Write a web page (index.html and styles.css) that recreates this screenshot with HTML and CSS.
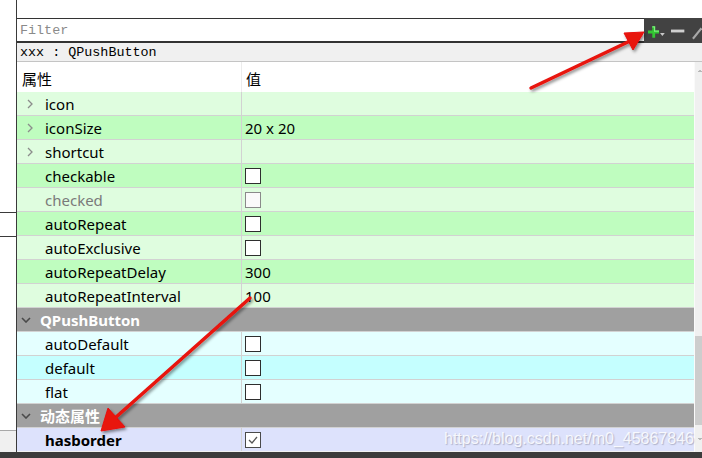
FILE: index.html
```html
<!DOCTYPE html>
<html lang="zh">
<head>
<meta charset="utf-8">
<title>Property Editor</title>
<link rel="stylesheet" href="styles.css">
</head>
<body>
<div class="app">
  <div class="body">
    <div class="side">
      <div class="side-box"></div>
      <div class="side-fill"></div>
      <div class="side-bottom"></div>
    </div>
    <div class="main">
      <div class="top"></div>
      <div class="filter-row">
        <div class="filter">Filter</div>
        <div class="tools">
          <svg class="ic-plus" width="12" height="12" viewBox="0 0 12 12"><path d="M4.5 0h3v4.5H12v3H7.5V12h-3V7.5H0v-3h4.5z" fill="#33c733"/><path d="M4.5 0h3v4.5H12v1.2H6.3V1.2H4.5z" fill="#7ef07e"/></svg>
          <svg class="ic-drop" width="5" height="3" viewBox="0 0 5 3"><path d="M0 0h5L2.5 3z" fill="#c8c8c8"/></svg>
          <svg class="ic-minus" width="14" height="4" viewBox="0 0 14 4"><rect x="0" y="0.5" width="14" height="3" fill="#cfcfcf"/></svg>
          <svg class="ic-edit" width="12" height="14" viewBox="0 0 12 14"><path d="M2 13 L11 2" stroke="#a8a8a8" stroke-width="2.2"/></svg>
        </div>
      </div>
      <div class="objbar">xxx : QPushButton</div>
      <div class="tree">
        <div class="tbl">
          <div class="row head"><div class="c1 hc1">属性</div><div class="c2 hc2">值</div></div>

          <div class="row g1"><div class="c1"><span class="exp"><svg width="6" height="10" viewBox="0 0 6 10"><polyline points="1,1 5,5 1,9" fill="none" stroke="#8c8c8c" stroke-width="1.3"/></svg></span>icon</div><div class="c2"></div></div>
          <div class="row g2"><div class="c1"><span class="exp"><svg width="6" height="10" viewBox="0 0 6 10"><polyline points="1,1 5,5 1,9" fill="none" stroke="#8c8c8c" stroke-width="1.3"/></svg></span>iconSize</div><div class="c2">20 x 20</div></div>
          <div class="row g1"><div class="c1"><span class="exp"><svg width="6" height="10" viewBox="0 0 6 10"><polyline points="1,1 5,5 1,9" fill="none" stroke="#8c8c8c" stroke-width="1.3"/></svg></span>shortcut</div><div class="c2"></div></div>
          <div class="row g2"><div class="c1"><span class="exp"></span>checkable</div><div class="c2"><span class="cb"></span></div></div>
          <div class="row g1"><div class="c1 dim"><span class="exp"></span>checked</div><div class="c2"><span class="cb off"></span></div></div>
          <div class="row g2"><div class="c1"><span class="exp"></span>autoRepeat</div><div class="c2"><span class="cb"></span></div></div>
          <div class="row g1"><div class="c1"><span class="exp"></span>autoExclusive</div><div class="c2"><span class="cb"></span></div></div>
          <div class="row g2"><div class="c1"><span class="exp"></span>autoRepeatDelay</div><div class="c2">300</div></div>
          <div class="row g1"><div class="c1"><span class="exp"></span>autoRepeatInterval</div><div class="c2">100</div></div>

          <div class="row sect"><span class="sexp"><svg width="10" height="6" viewBox="0 0 10 6"><polyline points="1,1 5,5 9,1" fill="none" stroke="#4a4a4a" stroke-width="1.6"/></svg></span>QPushButton</div>
          <div class="row c1r"><div class="c1"><span class="exp"></span>autoDefault</div><div class="c2"><span class="cb"></span></div></div>
          <div class="row c2r"><div class="c1"><span class="exp"></span>default</div><div class="c2"><span class="cb"></span></div></div>
          <div class="row c1r"><div class="c1"><span class="exp"></span>flat</div><div class="c2"><span class="cb"></span></div></div>

          <div class="row sect"><span class="sexp"><svg width="10" height="6" viewBox="0 0 10 6"><polyline points="1,1 5,5 9,1" fill="none" stroke="#4a4a4a" stroke-width="1.6"/></svg></span>动态属性</div>
          <div class="row dyn"><div class="c1 bold"><span class="exp"></span>hasborder</div><div class="c2"><span class="cb on"><svg width="12" height="10" viewBox="0 0 12 10"><polyline points="2,5 5,8 10,2" fill="none" stroke="#555" stroke-width="1.3"/></svg></span></div></div>
        </div>
        <div class="scroll">
          <div class="sb-up"><svg width="8" height="6" viewBox="0 0 8 6"><polyline points="1,5 4,2 7,5" fill="none" stroke="#606060" stroke-width="1.6"/></svg></div>
          <div class="sb-space"></div>
          <div class="sb-thumb"></div>
          <div class="sb-down"><svg width="8" height="6" viewBox="0 0 8 6"><polyline points="1,1 4,4 7,1" fill="none" stroke="#606060" stroke-width="1.6"/></svg></div>
        </div>
      </div>
    </div>
  </div>
  <div class="bottom"></div>

  <svg class="arrows" width="702" height="458" viewBox="0 0 702 458">
    <defs>
      <filter id="sh" x="-20%" y="-20%" width="140%" height="140%">
        <feDropShadow dx="1.5" dy="2" stdDeviation="1.6" flood-color="#000" flood-opacity="0.45"/>
      </filter>
    </defs>
    <g filter="url(#sh)" fill="#e8120e" stroke="#e8120e">
      <line x1="531" y1="88" x2="630" y2="41" stroke-width="3.4" stroke-linecap="round"/>
      <polygon points="644,32 624,33 633,50" stroke-width="1" stroke-linejoin="round"/>
      <line x1="250" y1="298" x2="115" y2="418" stroke-width="3.4" stroke-linecap="round"/>
      <polygon points="101,431 108,408 125,427" stroke-width="1" stroke-linejoin="round"/>
    </g>
  </svg>
  <div class="watermark">https://blog.csdn.net/m0_45867846</div>
</div>
</body>
</html>
```

FILE: styles.css
```css
* { box-sizing: border-box; }

html, body {
  margin: 0;
  padding: 0;
  background: #ffffff;
}

body {
  width: 702px;
  height: 458px;
  overflow: hidden;
  font-family: "Noto Sans", "Noto Sans CJK SC", sans-serif;
  font-size: 15px;
  color: #000;
}

.app {
  position: relative;
  width: 702px;
  height: 458px;
  display: flex;
  flex-direction: column;
}

.body {
  display: flex;
  height: 452px;
}

/* left neighbour panel */
.side {
  width: 17px;
  border-right: 1px solid #3a3a3a;
  display: flex;
  flex-direction: column;
}
.side-box {
  margin-top: 212px;
  height: 25px;
  border-top: 1px solid #3a3a3a;
  border-bottom: 1px solid #3a3a3a;
}
.side-fill { flex: 1; }
.side-bottom {
  height: 22px;
  background: #f0f0f0;
  border-top: 1px solid #a8a8a8;
}

.main {
  flex: 1;
  display: flex;
  flex-direction: column;
  min-width: 0;
}

.top { height: 18px; }

.filter-row {
  display: flex;
  height: 25px;
}
.filter {
  flex: 1;
  border-top: 1px solid #333;
  border-bottom: 2px solid #333;
  padding-left: 3px;
  padding-top: 2px;
  font-family: "Liberation Mono", monospace;
  font-size: 13.4px;
  line-height: 20px;
  color: #8a8a8a;
}
.tools {
  width: 58px;
  background: #424242;
  display: flex;
  align-items: center;
  padding-left: 4px;
}
.ic-plus { margin-top: 3px; }
.ic-drop { margin-left: 1px; margin-top: 8px; }
.ic-minus { margin-left: 6px; margin-top: 1px; }
.ic-edit { margin-left: 6px; margin-top: 4px; }

.objbar {
  height: 19px;
  background: #f0f0f0;
  border-bottom: 1px solid #c4c4c4;
  padding-left: 3px;
  padding-top: 2px;
  font-family: "Liberation Mono", monospace;
  font-size: 13.4px;
  line-height: 16px;
  color: #000;
}

.tree {
  flex: 1;
  display: flex;
  min-height: 0;
}
.tbl {
  flex: 1;
  display: flex;
  flex-direction: column;
}

.row {
  display: flex;
  height: 24px;
  border-bottom: 1px solid #d2d2d2;
  line-height: 22px;
  padding-top: 1px;
  white-space: nowrap;
}
.c1 {
  width: 225px;
  border-right: 1px solid #d2d2d2;
  margin-top: -1px;
  padding-top: 1px;
  padding-left: 9px;
  display: flex;
  align-items: center;
}
.c2 {
  flex: 1;
  padding-left: 3px;
  display: flex;
  align-items: center;
}
.exp {
  width: 19px;
  display: flex;
  align-items: center;
}
.exp svg { margin-left: 1px; }

.head {
  height: 30px;
  background: #fff;
  border-bottom: none;
  padding-top: 0;
  line-height: 30px;
}
.hc1 { padding-left: 5px; padding-top: 4px; margin-top: 0; border-right: 1px solid #ececec; }
.hc2 { padding-left: 4px; padding-top: 4px; }

.g1 { background: #dffddf; }
.g2 { background: #bffdbf; }
.c1r { background: #e4ffff; }
.c2r { background: #c5ffff; }
.dyn { background: #dde2fc; border-bottom: 1px solid #f2f2f2; }

.dim { color: #7a7a7a; }
.bold { font-weight: 700; }

.sect {
  background: #a0a0a0;
  color: #fff;
  font-weight: 700;
  padding-left: 3px;
  align-items: center;
}
.sexp {
  width: 20px;
  display: flex;
  align-items: center;
  padding-left: 1px;
}

.cb {
  width: 16px;
  height: 16px;
  border: 1px solid #2e2e2e;
  background: #fff;
  display: flex;
  align-items: center;
  justify-content: center;
}
.cb.off { border-color: #8a8a8a; background: #fafafa; }
.cb.on { border-color: #4a4a4a; }

.scroll {
  width: 8px;
  background: #f0f0f0;
  display: flex;
  flex-direction: column;
  border-left: 1px solid #fafafa;
}
.sb-up {
  height: 17px;
  display: flex;
  align-items: center;
  padding-left: 3px;
}
.sb-space { flex: 1; }
.sb-thumb { height: 89px; background: #cdcdcd; }
.sb-down {
  height: 27px;
  display: flex;
  align-items: center;
  padding-left: 3px;
}

.bottom {
  height: 6px;
  background: #3c3c3c;
}

.arrows {
  position: absolute;
  left: 0;
  top: 0;
  pointer-events: none;
}

.watermark {
  position: absolute;
  left: 444px;
  top: 429px;
  font-family: "Liberation Sans", Arial, sans-serif;
  font-size: 16px;
  line-height: 20px;
  color: rgba(255, 255, 255, 0.85);
  text-shadow: 1px 1px 1px rgba(120, 120, 140, 0.45);
  pointer-events: none;
}
```
